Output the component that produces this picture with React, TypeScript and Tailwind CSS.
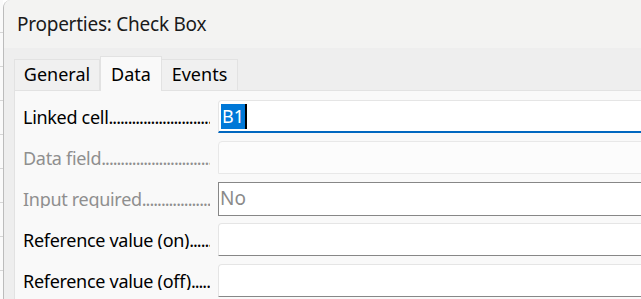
import React from "react";

const dots = ".".repeat(60);

function Label({
  pre,
  acc,
  post,
  disabled,
}: {
  pre: string;
  acc: string;
  post: string;
  disabled?: boolean;
}) {
  return (
    <div
      className={`flex w-[187px] shrink-0 items-center overflow-hidden whitespace-nowrap text-[18px] leading-none ${
        disabled ? "text-[#8f8f8f]" : "text-[#000000]"
      }`}
    >
      <span className="shrink-0 tracking-[-0.3px]">
        {pre}
        <span className="underline decoration-1 underline-offset-[3px]">{acc}</span>
        {post}
      </span>
      <span className="min-w-0 flex-1 overflow-hidden tracking-[-1px]">{dots}</span>
    </div>
  );
}

export default function App() {
  return (
    <div className="flex h-[299px] w-[641px] overflow-hidden bg-white font-['Noto_Sans',sans-serif]">
      {/* spreadsheet strip behind */}
      <div className="flex w-[3px] shrink-0 flex-col bg-[#fafafa]">
        <div className="h-[33px] shrink-0 border-b border-[#d6d6d6]" />
        <div className="h-[34px] shrink-0 border-b border-[#d6d6d6]" />
        <div className="h-[34px] shrink-0 border-b border-[#d6d6d6]" />
        <div className="h-[34px] shrink-0 border-b border-[#d6d6d6]" />
        <div className="h-[34px] shrink-0 border-b border-[#d6d6d6]" />
        <div className="h-[34px] shrink-0 border-b border-[#d6d6d6]" />
        <div className="h-[34px] shrink-0 border-b border-[#d6d6d6]" />
        <div className="h-[34px] shrink-0 border-b border-[#d6d6d6]" />
      </div>

      {/* dialog window */}
      <div className="flex min-w-0 flex-1 flex-col overflow-hidden rounded-tl-[8px] border-l border-[#bcbcbc] bg-[#eeeeee]">
        {/* title bar */}
        <div className="flex h-[48px] shrink-0 items-center bg-[#f3f3f2] pl-[13px] text-[19px] tracking-[-0.25px] text-[#1a1a1a]">
          Properties: Check Box
        </div>

        {/* tabs */}
        <div className="flex h-[42px] shrink-0 items-end pl-[10px]">
          <div className="flex h-[31px] w-[86px] items-center justify-center border border-b-0 border-[#e2e2e2] bg-[#f0f0f0] pb-[1px] text-[18px] text-black">
            General
          </div>
          <div className="relative z-10 -mb-px flex h-[35px] w-[62px] items-center justify-center border border-b-0 border-[#e2e2e2] bg-[#f9f9f9] pt-[1px] text-[18px] text-black">
            Data
          </div>
          <div className="flex h-[31px] w-[76px] items-center justify-center border border-b-0 border-l-0 border-[#e2e2e2] bg-[#f0f0f0] pb-[1px] text-[18px] text-black">
            Events
          </div>
        </div>

        {/* panel */}
        <div className="ml-[10px] flex flex-1 flex-col gap-[8px] border-l border-t border-[#e2e2e2] bg-[#f9f9f9] pl-[8px] pt-[9px]">
          {/* Linked cell */}
          <div className="flex h-[33px] items-center gap-[8px]">
            <Label pre="" acc="L" post="inked cell" />
            <div className="flex h-[33px] w-[460px] shrink-0 items-center rounded-tl-[4px] border border-b-2 border-[#e5e5e5] border-b-[#0067c0] bg-white pl-[2px]">
              <span className="flex h-[25px] items-center bg-[#0078d7] px-[1px] text-[18px] leading-none text-white">
                B1
              </span>
              <span className="h-[25px] w-[2px] bg-black" />
            </div>
          </div>

          {/* Data field */}
          <div className="flex h-[33px] items-center gap-[8px]">
            <Label pre="" acc="D" post="ata field" disabled />
            <div className="h-[33px] w-[460px] shrink-0 rounded-tl-[4px] border border-[#e8e8e8] bg-[#fcfcfc]" />
          </div>

          {/* Input required */}
          <div className="flex h-[33px] items-center gap-[8px]">
            <Label pre="" acc="I" post="nput required" disabled />
            <div className="flex h-[34px] w-[460px] shrink-0 items-center border border-[#878787] bg-white pl-[1px] text-[19px] text-[#8a8a8a]">
              No
            </div>
          </div>

          {/* Reference value (on) */}
          <div className="flex h-[33px] items-center gap-[8px]">
            <Label pre="" acc="R" post="eference value (on)" />
            <div className="h-[33px] w-[460px] shrink-0 rounded-tl-[4px] border border-[#e5e5e5] border-b-[#878787] bg-white" />
          </div>

          {/* Reference value (off) */}
          <div className="flex h-[33px] items-center gap-[8px]">
            <Label pre="Reference " acc="v" post="alue (off)" />
            <div className="h-[33px] w-[460px] shrink-0 rounded-tl-[4px] border border-[#e5e5e5] border-b-[#878787] bg-white" />
          </div>
        </div>
      </div>
    </div>
  );
}
